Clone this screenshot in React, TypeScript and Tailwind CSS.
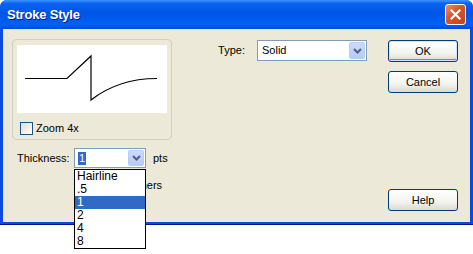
import React from 'react';

const font = { fontFamily: '"Liberation Sans", Arial, sans-serif' };

function DropButton() {
    return (
        <div className="h-full w-[16px] flex items-center justify-center rounded-[2px] border border-[#B9CBF3] bg-[linear-gradient(to_bottom,#CCDAFD,#B7CAF6)]">
            <svg width="9" height="6" viewBox="0 0 9 6">
                <path d="M1 1 L4.5 4.5 L8 1" fill="none" stroke="#4D6185" strokeWidth="2" />
            </svg>
        </div>
    );
}

function Checkbox() {
    return <div className="w-[13px] h-[13px] border border-[#1C5180] bg-[linear-gradient(135deg,#DCDCD7,#FFFFFF)] shrink-0" />;
}

function XpButton({ label, isDefault }: { label: string; isDefault?: boolean }) {
    return (
        <div
            className={`w-[70px] h-[22px] flex items-center justify-center rounded-[3px] border border-[#003C74] bg-[linear-gradient(to_bottom,#FFFFFF,#F3F3EF_60%,#DCD8CF)] text-[11px] text-black ${
                isDefault ? 'shadow-[inset_0_0_0_1px_#CEE7FF,inset_0_-1px_0_1px_#6982EE]' : ''
            }`}
        >
            {label}
        </div>
    );
}

export default function App() {
    const sizes = ['Hairline', '.5', '1', '2', '4', '8'];

    return (
        <div className="w-[473px] h-[254px] bg-white" style={font}>
            <div className="w-[473px] h-[225px] flex flex-col rounded-t-[7px] bg-[#0A4BE0] border-b border-[#001A8C]">
                {/* Title bar */}
                <div className="h-[29px] shrink-0 flex items-center justify-between pl-[7px] pr-[7px] rounded-t-[7px] bg-[linear-gradient(to_bottom,#3D95FF_0%,#0A63F0_12%,#0055E5_45%,#0160F5_85%,#0048D8_100%)]">
                    <span className="text-[13px] font-bold text-white tracking-[-0.2px] [text-shadow:1px_1px_0_#0A1E8A]">Stroke Style</span>
                    <div className="w-[21px] h-[21px] rounded-[3px] border border-white bg-[linear-gradient(135deg,#F08A66,#D9522C_45%,#C5431F)] flex items-center justify-center">
                        <svg width="11" height="11" viewBox="0 0 11 11">
                            <path d="M1.5 1.5 L9.5 9.5 M9.5 1.5 L1.5 9.5" stroke="white" strokeWidth="2.2" strokeLinecap="square" />
                        </svg>
                    </div>
                </div>

                {/* Client area */}
                <div className="flex-1 mx-[3px] mb-[2px] bg-[#ECE9D8] flex pl-[9px] pt-[10px] text-[11px] text-black">
                    {/* Left column */}
                    <div className="w-[160px] flex flex-col">
                        <div className="h-[101px] rounded-[4px] border border-[#D0D0BF] pt-[5px] pl-[4px]">
                            <div className="w-[150px] h-[68px] bg-white">
                                <svg width="150" height="68" viewBox="0 0 150 68">
                                    <path d="M8 33.5 L50 33.5 L74 11 L74 55 C88 44 110 33.5 140 33.5" fill="none" stroke="#000" strokeWidth="1.2" />
                                </svg>
                            </div>
                            <div className="flex items-center gap-[3px] mt-[7px] ml-[3px]">
                                <Checkbox />
                                <span>Zoom 4x</span>
                            </div>
                        </div>

                        <div className="flex items-center mt-[8px] pl-[5px]">
                            <span className="w-[57px]">Thickness:</span>
                            <div className="relative w-[72px] h-[20px] border border-[#7F9DB9] bg-white flex items-center p-[1px]">
                                <div className="flex-1 pl-[2px] flex items-center">
                                    <span className="bg-[#316AC5] text-white px-[1px] leading-[13px]">1</span>
                                </div>
                                <DropButton />
                                {/* Open list */}
                                <div className="absolute left-[-1px] top-[20px] z-10 w-[72px] border border-black bg-white">
                                    {sizes.map((s) => (
                                        <div
                                            key={s}
                                            className={`h-[13px] leading-[13px] pl-[2px] text-[12px] ${s === '1' ? 'bg-[#316AC5] text-white' : 'text-black'}`}
                                        >
                                            {s}
                                        </div>
                                    ))}
                                </div>
                            </div>
                            <span className="ml-[7px]">pts</span>
                        </div>

                        <div className="flex items-center gap-[3px] mt-[9px] ml-[65px]">
                            <Checkbox />
                            <span>Sharp corners</span>
                        </div>
                    </div>

                    {/* Middle */}
                    <div className="flex-1 flex justify-end items-start pt-[1px]">
                        <div className="flex items-center">
                            <span className="mr-[12px]">Type:</span>
                            <div className="w-[110px] h-[21px] border border-[#7F9DB9] bg-white flex items-center p-[1px]">
                                <span className="flex-1 pl-[3px]">Solid</span>
                                <DropButton />
                            </div>
                        </div>
                    </div>

                    {/* Buttons */}
                    <div className="w-[70px] ml-[21px] mr-[12px] flex flex-col pt-[1px] pb-[11px]">
                        <XpButton label="OK" isDefault />
                        <div className="mt-[9px]">
                            <XpButton label="Cancel" />
                        </div>
                        <div className="mt-auto">
                            <XpButton label="Help" />
                        </div>
                    </div>
                </div>
            </div>
        </div>
    );
}
